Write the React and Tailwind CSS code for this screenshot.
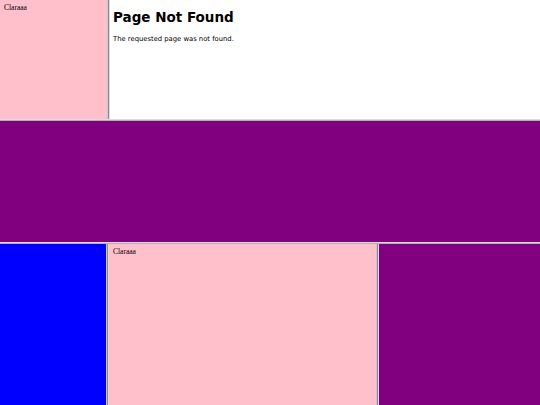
export default function App() {
  return (
    <div className="w-[540px] h-[405px] flex flex-col overflow-hidden bg-white">
      <div className="h-[119px] flex">
        <div className="w-[107px] bg-[#ffc0cb] pl-[4px] pt-[4px]">
          <div className="text-[7.5px] leading-none text-black" style={{ fontFamily: '"Liberation Serif", serif' }}>Claraaa</div>
        </div>
        <div className="w-[3px] bg-[#8a8a8a] border-l border-r border-l-[#c8c8c8] border-r-[#dcdcdc]"></div>
        <div className="flex-1 bg-white pl-[3px] pt-[11px]" style={{ fontFamily: '"DejaVu Sans", sans-serif' }}>
          <div className="text-[13.5px] leading-none font-bold text-black">Page Not Found</div>
          <div className="mt-[11px] text-[6.8px] leading-none text-black">The requested page was not found.</div>
        </div>
      </div>
      <div className="h-[2px] bg-[#b0b0b0] border-t border-t-[#dcdcdc]"></div>
      <div className="h-[121px] bg-[#800080]"></div>
      <div className="h-[2px] bg-[#b0b0b0] border-t border-t-[#dcdcdc]"></div>
      <div className="flex-1 flex">
        <div className="w-[106px] bg-[#0000ff]"></div>
        <div className="w-[3px] bg-[#8a8a8a] border-l border-r border-l-[#c8c8c8] border-r-[#dcdcdc]"></div>
        <div className="w-[267px] bg-[#ffc0cb] pl-[4px] pt-[4px]">
          <div className="text-[7.5px] leading-none text-black" style={{ fontFamily: '"Liberation Serif", serif' }}>Claraaa</div>
        </div>
        <div className="w-[3px] bg-[#8a8a8a] border-l border-r border-l-[#c8c8c8] border-r-[#dcdcdc]"></div>
        <div className="flex-1 bg-[#800080]"></div>
      </div>
    </div>
  );
}
